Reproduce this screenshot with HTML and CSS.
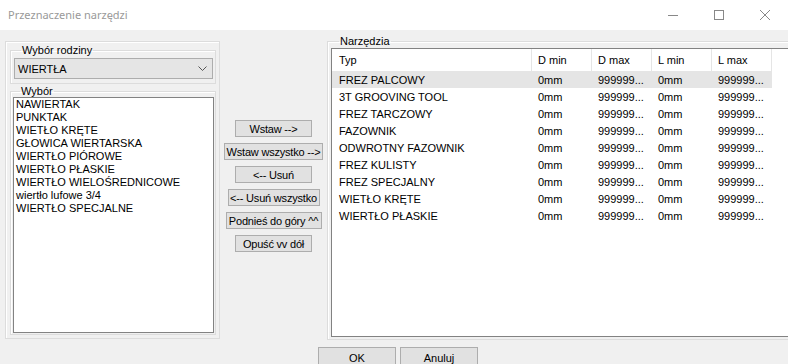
FILE: index.html
```html
<!DOCTYPE html>
<html lang="pl">
<head>
    <meta charset="UTF-8">
    <title>Przeznaczenie narzędzi</title>
    <link rel="stylesheet" href="styles.css">
</head>
<body>
    <div class="window">
        <div class="titlebar">
            <span class="title">Przeznaczenie narzędzi</span>
            <div class="controls">
                <span class="ctl"><svg width="12" height="12" viewBox="0 0 12 12"><path d="M1 6.5h10" stroke="#888" stroke-width="1"/></svg></span>
                <span class="ctl"><svg width="12" height="12" viewBox="0 0 12 12"><rect x="1.5" y="1.5" width="9" height="9" fill="none" stroke="#888"/></svg></span>
                <span class="ctl"><svg width="12" height="12" viewBox="0 0 12 12"><path d="M1 1l10 10M11 1L1 11" stroke="#888" stroke-width="1"/></svg></span>
            </div>
        </div>

        <div class="main">
            <div class="leftbox">
                <fieldset class="grp family">
                    <legend>Wybór rodziny</legend>
                    <div class="combo">
                        <span>WIERTŁA</span>
                        <svg width="9" height="6" viewBox="0 0 9 6"><path d="M0.5 0.5l4 4 4-4" fill="none" stroke="#555"/></svg>
                    </div>
                </fieldset>
                <fieldset class="grp choice">
                    <legend>Wybór</legend>
                    <ul class="listbox">
                        <li>NAWIERTAK</li>
                        <li>PUNKTAK</li>
                        <li>WIETŁO KRĘTE</li>
                        <li>GŁOWICA WIERTARSKA</li>
                        <li>WIERTŁO PIÓROWE</li>
                        <li>WIERTŁO PŁASKIE</li>
                        <li>WIERTŁO WIELOŚREDNICOWE</li>
                        <li>wiertło lufowe 3/4</li>
                        <li>WIERTŁO SPECJALNE</li>
                    </ul>
                </fieldset>
            </div>

            <div class="actions">
                <button class="btn w77">Wstaw --&gt;</button>
                <button class="btn w99">Wstaw wszystko --&gt;</button>
                <button class="btn w77">&lt;-- Usuń</button>
                <button class="btn w92">&lt;-- Usuń wszystko</button>
                <button class="btn w96">Podnieś do góry ^^</button>
                <button class="btn w77">Opuść vv dół</button>
            </div>

            <fieldset class="grp tools">
                <legend>Narzędzia</legend>
                <div class="listview">
                    <div class="row head">
                        <span class="c typ">Typ</span>
                        <span class="c">D min</span>
                        <span class="c">D max</span>
                        <span class="c">L min</span>
                        <span class="c">L max</span>
                    </div>
                    <div class="row sel"><span class="c typ">FREZ PALCOWY</span><span class="c">0mm</span><span class="c">999999...</span><span class="c">0mm</span><span class="c">999999...</span></div>
                    <div class="row"><span class="c typ">3T GROOVING TOOL</span><span class="c">0mm</span><span class="c">999999...</span><span class="c">0mm</span><span class="c">999999...</span></div>
                    <div class="row"><span class="c typ">FREZ TARCZOWY</span><span class="c">0mm</span><span class="c">999999...</span><span class="c">0mm</span><span class="c">999999...</span></div>
                    <div class="row"><span class="c typ">FAZOWNIK</span><span class="c">0mm</span><span class="c">999999...</span><span class="c">0mm</span><span class="c">999999...</span></div>
                    <div class="row"><span class="c typ">ODWROTNY FAZOWNIK</span><span class="c">0mm</span><span class="c">999999...</span><span class="c">0mm</span><span class="c">999999...</span></div>
                    <div class="row"><span class="c typ">FREZ KULISTY</span><span class="c">0mm</span><span class="c">999999...</span><span class="c">0mm</span><span class="c">999999...</span></div>
                    <div class="row"><span class="c typ">FREZ SPECJALNY</span><span class="c">0mm</span><span class="c">999999...</span><span class="c">0mm</span><span class="c">999999...</span></div>
                    <div class="row"><span class="c typ">WIETŁO KRĘTE</span><span class="c">0mm</span><span class="c">999999...</span><span class="c">0mm</span><span class="c">999999...</span></div>
                    <div class="row"><span class="c typ">WIERTŁO PŁASKIE</span><span class="c">0mm</span><span class="c">999999...</span><span class="c">0mm</span><span class="c">999999...</span></div>
                </div>
            </fieldset>
        </div>

        <div class="footer">
            <button class="btn big">OK</button>
            <button class="btn big">Anuluj</button>
        </div>
    </div>
</body>
</html>
```

FILE: styles.css
```css
* {margin: 0; padding: 0; box-sizing: border-box;}
body {width: 788px; height: 364px; overflow: hidden; background: #f0f0f0;
    font-family: "Liberation Sans", Arial, sans-serif; font-size: 11px; color: #000;}

.window {width: 788px; height: 364px; overflow: hidden;}

.titlebar {height: 30px; background: #fff; display: flex; align-items: center; justify-content: space-between;}
.titlebar .title {font-family: "Noto Sans", sans-serif; font-size: 11px; color: #999; padding-left: 8px; padding-bottom: 2px;}
.titlebar .controls {display: flex; height: 30px;}
.titlebar .ctl {width: 46px; height: 30px; display: flex; align-items: center; justify-content: center;}

.main {display: flex; align-items: flex-start; padding-top: 11px; height: 311px;}
.main > * {flex-shrink: 0;}

/* etched group boxes */
.leftbox {margin-left: 5px; width: 215px; height: 298px; border: 1px solid #dcdcdc;
    box-shadow: inset 1px 1px 0 #fff; padding: 0 3px 0 4px;}
.grp {border: 1px solid #dcdcdc; box-shadow: inset 1px 1px 0 #fff; min-width: 0;}
.grp legend {margin-left: 7px; padding: 0 1px; line-height: 12px; font-size: 11px;}

.family {margin-top: 2px; height: 40px; padding: 2px 2px 0 3px;}
.combo {height: 21px; background: #e5e5e5; border: 1px solid #adadad; display: flex;
    align-items: center; justify-content: space-between; padding: 0 5px 0 3px; font-size: 11px;}

.choice {margin-top: 1px; height: 250px; padding: 0 1px 0 2px;}
.listbox {list-style: none; background: #fff; border: 1px solid #828282; height: 236px; padding: 0 0 0 2px;}
.listbox li {line-height: 13px; white-space: nowrap;}

.actions {width: 107px; display: flex; flex-direction: column; align-items: center; gap: 6px; padding-top: 79px;}
.btn {font-family: "Liberation Sans", Arial, sans-serif; font-size: 11px; font-weight: normal; color: #000;
    background: #e1e1e1; border: 1px solid #adadad; height: 17px; line-height: 14px; padding: 0;
    white-space: nowrap; letter-spacing: -0.2px;}
.w77 {width: 77px;}
.w99 {width: 99px;}
.w92 {width: 92px;}
.w96 {width: 96px;}

.tools {width: 470px; height: 305px; margin-top: -6px; padding: 0 0 0 3px;}
.tools legend {margin-left: 8px;}
.listview {background: #fff; border: 1px solid #828282; height: 289px; margin-top: 1px;}
.row {display: flex; height: 17px; align-items: center; white-space: nowrap;}
.row.head {height: 22px;}
.row.sel {background: #e5e5e5; width: 440px;}
.row .c {width: 60px; padding-left: 6px; overflow: hidden;}
.row .c.typ {width: 200px; padding-left: 7px;}
.row.head .c {border-right: 1px solid #e5e5e5; height: 22px; line-height: 22px;}

.footer {display: flex; gap: 4px; padding-left: 318px; padding-top: 6px;}
.btn.big {width: 78px; height: 22px; line-height: 18px; font-size: 11px; letter-spacing: 0;}
```
